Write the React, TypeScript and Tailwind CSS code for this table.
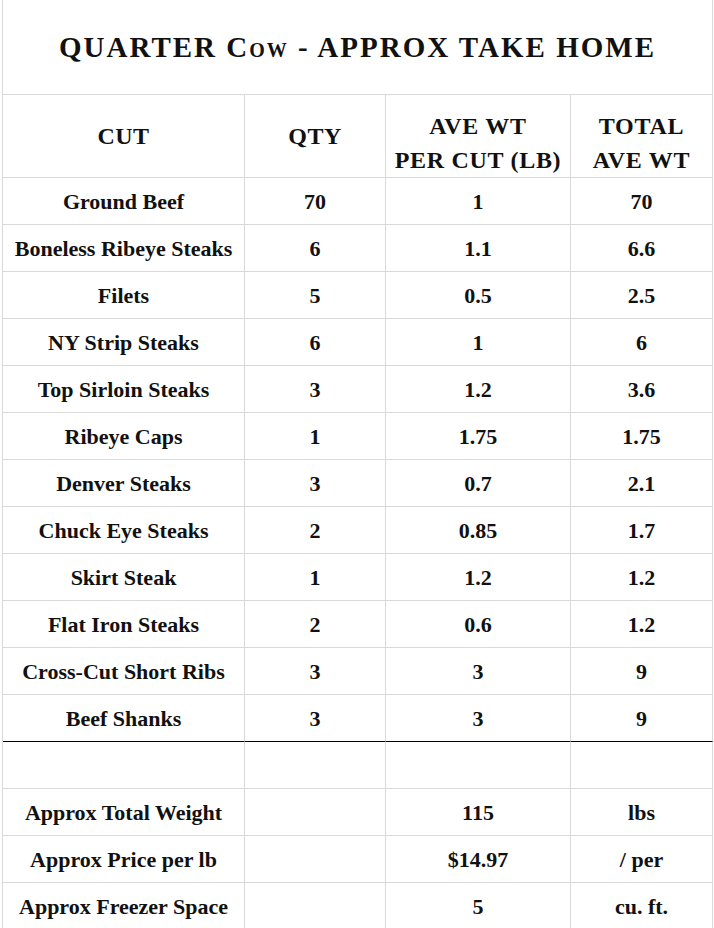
const rows: [string, string, string, string][] = [
  ["Ground Beef", "70", "1", "70"],
  ["Boneless Ribeye Steaks", "6", "1.1", "6.6"],
  ["Filets", "5", "0.5", "2.5"],
  ["NY Strip Steaks", "6", "1", "6"],
  ["Top Sirloin Steaks", "3", "1.2", "3.6"],
  ["Ribeye Caps", "1", "1.75", "1.75"],
  ["Denver Steaks", "3", "0.7", "2.1"],
  ["Chuck Eye Steaks", "2", "0.85", "1.7"],
  ["Skirt Steak", "1", "1.2", "1.2"],
  ["Flat Iron Steaks", "2", "0.6", "1.2"],
  ["Cross-Cut Short Ribs", "3", "3", "9"],
  ["Beef Shanks", "3", "3", "9"],
];

const totals: [string, string, string][] = [
  ["Approx Total Weight", "115", "lbs"],
  ["Approx Price per lb", "$14.97", "/ per"],
  ["Approx Freezer Space", "5", "cu. ft."],
];

function Cell({ children, last }: { children?: React.ReactNode; last?: boolean }) {
  return (
    <div
      className={
        "flex items-center justify-center text-center border-r border-b border-[#d9d9d9] " +
        (last ? "border-b-black" : "")
      }
    >
      {children}
    </div>
  );
}

export default function App() {
  return (
    <div className="w-[714px] h-[928px] overflow-hidden bg-white pl-[2px] text-[#111] font-serif">
      <div className="w-[711px] border-l border-[#d9d9d9] font-[Liberation_Serif]">
        {/* TITLE */}
        <div className="h-[95px] flex items-center justify-center border-r border-b border-[#d9d9d9]">
          <h1 className="text-[29px] font-bold tracking-[2px] pt-[2px]">
            QUARTER <span className="[font-variant-caps:small-caps]">Cow</span> - APPROX TAKE HOME
          </h1>
        </div>

        <div className="grid grid-cols-[242px_141px_185px_142px] auto-rows-[47px] grid-rows-[83px] text-[22px] font-bold">
          {/* HEADER */}
          <Cell>
            <span className="text-[24px] tracking-[0.5px]">CUT</span>
          </Cell>
          <Cell>
            <span className="text-[24px] tracking-[0.5px]">QTY</span>
          </Cell>
          <Cell>
            <span className="text-[24px] tracking-[0.7px] leading-[34px] pt-[13px]">
              AVE WT
              <br />
              PER CUT (LB)
            </span>
          </Cell>
          <Cell>
            <span className="text-[24px] tracking-[0.7px] leading-[34px] pt-[13px]">
              TOTAL
              <br />
              AVE WT
            </span>
          </Cell>

          {rows.map((r, i) => {
            const last = i === rows.length - 1;
            return (
              <div key={r[0]} className="contents">
                <Cell last={last}>{r[0]}</Cell>
                <Cell last={last}>{r[1]}</Cell>
                <Cell last={last}>{r[2]}</Cell>
                <Cell last={last}>{r[3]}</Cell>
              </div>
            );
          })}

          {/* SPACER */}
          <Cell />
          <Cell />
          <Cell />
          <Cell />

          {totals.map((t) => (
            <div key={t[0]} className="contents">
              <div className="col-span-2 grid grid-cols-[242px_141px]">
                <Cell>{t[0]}</Cell>
                <Cell />
              </div>
              <Cell>{t[1]}</Cell>
              <Cell>{t[2]}</Cell>
            </div>
          ))}
        </div>
      </div>
    </div>
  );
}
